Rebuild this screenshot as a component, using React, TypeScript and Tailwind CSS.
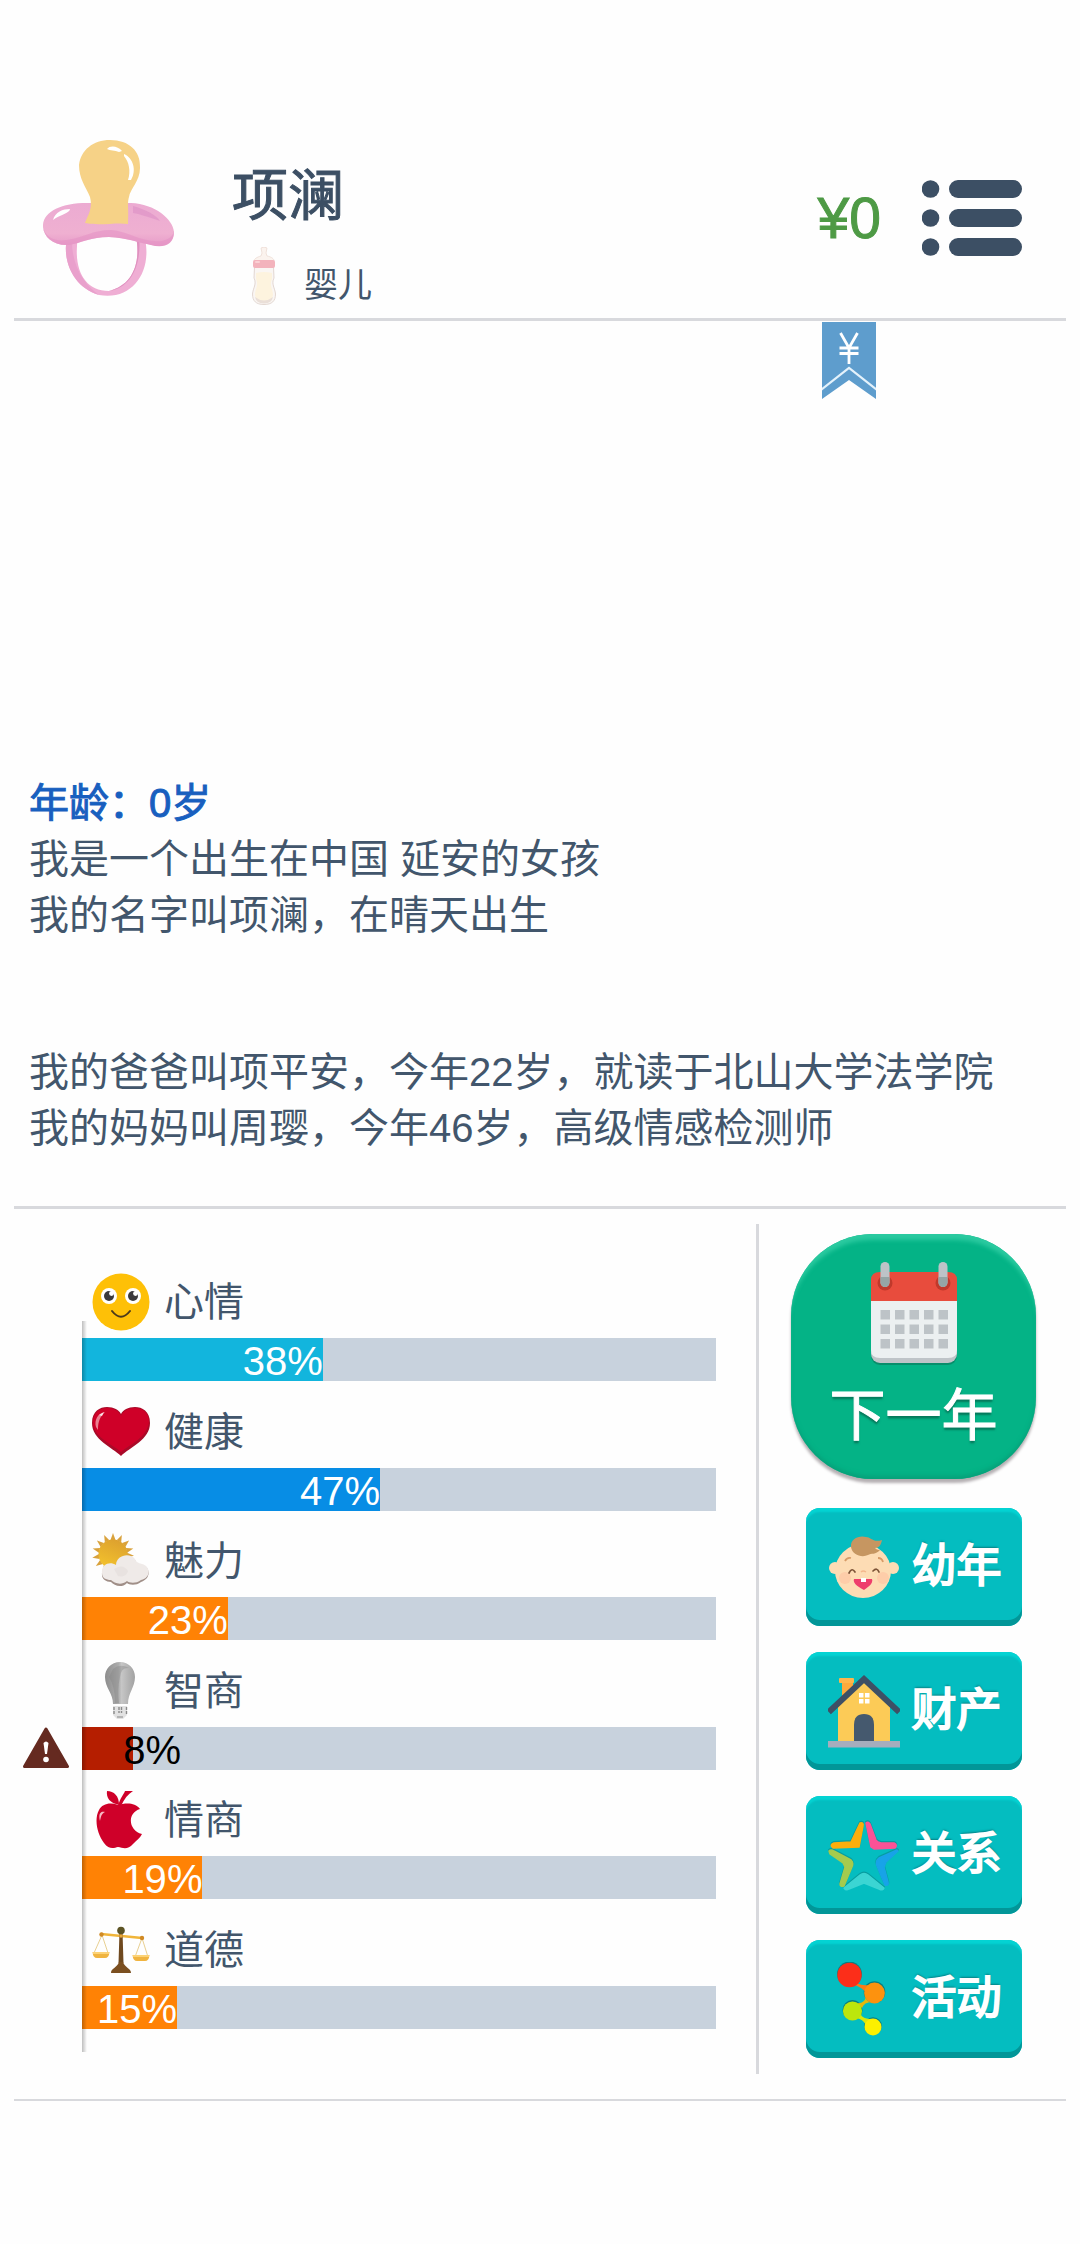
import type { ReactNode } from "react";

function Pacifier() {
  return (
    <svg viewBox="0 0 132 158" className="h-[158px] w-[132px] shrink-0" aria-hidden="true">
      <defs>
        <linearGradient id="shield" x1="0" y1="0" x2="0" y2="1">
          <stop offset="0" stopColor="#ecabd2" />
          <stop offset="0.7" stopColor="#efb0d1" />
          <stop offset="1" stopColor="#e79bc8" />
        </linearGradient>
      </defs>
      <path d="M24 98C19 122 30 148 56 156C90 162 109 132 102 100L93 97C98 124 90 146 66 152C40 152 30 128 35 98Z" fill="#efaed4" />
      <path d="M24 98C19 122 30 148 56 156C42 146 28 128 29 98Z" fill="#e9a0cc" />
      <path d="M93 97C98 124 90 146 66 152C88 149 99 126 96 97Z" fill="#df91bf" />
      <path d="M0 88C-1 72 20 63 48 64H88C112 65 130 80 131 93C131 107 119 109 108 106C94 103 84 99 66 98C48 98 38 104 26 106C10 107 1 98 0 88Z" fill="url(#shield)" />
      <path d="M0 88C2 98 12 103 24 101C42 98 50 91 68 91C86 92 98 104 119 102C128 100 131 95 131 91C132 105 121 109 108 106C94 103 84 99 66 98C48 98 38 104 26 106C10 107 1 98 0 88Z" fill="#e592c4" opacity="0.6" />
      <path d="M90 67C104 71 113 76 117 82C106 78 96 75 90 74Z" fill="#dc8fc4" opacity="0.6" />
      <path d="M10 81C12 73 20 70 27 70C27 74 16 76 10 81Z" fill="#fff" />
      <path d="M67 1C86 1 98 12 97 29C97 42 87 50 86 58C84 65 86 69 85 85C74 83 57 87 42 84C45 76 50 69 47 58C43 48 36 40 36 26C38 11 50 1 67 1Z" fill="#f6d287" />
      <path d="M64 10C67 6 75 7 79 12L76 13C72 11 67 12 64 10Z" fill="#fff" />
      <path d="M81 15C90 19 94 31 88 41L85 41C88 32 86 23 81 17Z" fill="#fff" />
    </svg>
  );
}

function Bottle() {
  return (
    <svg viewBox="0 0 24 58" className="h-[58px] w-6 shrink-0" aria-hidden="true">
      <path d="M9 1Q12 -1 15 1L14 6L15 9C20 10 22 12 22 14H2C2 12 5 10 9 9L10 6Z" fill="#fbf3ee" stroke="#ecdcd4" strokeWidth="0.8" />
      <path d="M2.500 20H21.500L22 31C19 37 23 41 23.500 47C23.500 54 20 57.500 12 57.500C4 57.500 0.500 54 0.500 47C1 41 5 37 2 31Z" fill="#faf6f3" stroke="#dfd3cd" strokeWidth="0.9" />
      <path d="M4 26Q12 24 20 26V32C17 38 21 42 21 48C20 53 17 54 12 54C7 54 4 53 3 48C3 42 7 38 4 32Z" fill="#fdf3de" />
      <path d="M3 50Q12 57 21 50Q20 56 12 56.500Q4 56 3 50Z" fill="#eadfd8" />
      <rect x="1" y="13" width="22" height="8" rx="2" fill="#f3b3bc" />
      <rect x="3" y="14" width="5" height="2" rx="1" fill="#fad0d4" />
    </svg>
  );
}

function MenuIcon() {
  return (
    <svg viewBox="0 0 100 76" className="h-[76px] w-[100px]" fill="#3c4f64" aria-hidden="true">
      {[0, 29, 58].map((y) => (
        <g key={y}>
          <circle cx="8.500" cy={y + 9} r="8.800" />
          <rect x="27" y={y} width="73" height="18" rx="9" />
        </g>
      ))}
    </svg>
  );
}

function Ribbon() {
  return (
    <svg viewBox="0 0 54 77" className="h-[77px] w-[54px]" aria-hidden="true">
      <path d="M0 0H54V77L27 58L0 77Z" fill="#5e9dcd" />
      <path d="M-1 68L27 46L55 68" fill="none" stroke="#e4f2fb" strokeWidth="2.200" />
      <path d="M18.500 11L27 26L35.500 11M17.500 26H36.500M17.500 31.500H36.500M27 25V42" fill="none" stroke="#fff" strokeWidth="2.800" />
    </svg>
  );
}

function Smiley() {
  return (
    <svg viewBox="0 0 58 58" className="size-[58px]" aria-hidden="true">
      <circle cx="29" cy="29" r="28.500" fill="#fec007" />
      <circle cx="17" cy="23" r="8" fill="#fff" />
      <circle cx="41" cy="23" r="8" fill="#fff" />
      <circle cx="17" cy="23" r="5" fill="#3b3a3c" />
      <circle cx="41" cy="23" r="5" fill="#3b3a3c" />
      <circle cx="19.500" cy="20.500" r="2.400" fill="#fff" />
      <circle cx="43.500" cy="20.500" r="2.400" fill="#fff" />
      <path d="M20 38Q29 49.500 38 38" fill="none" stroke="#4a3a1c" strokeWidth="2" strokeLinecap="round" />
    </svg>
  );
}

function Heart() {
  return (
    <svg viewBox="0 0 58 58" className="size-[58px]" aria-hidden="true">
      <path d="M29 53C20 44 0 37 0 20C0 8 8 4 15 4C22 4 27 7 29 11C31 7 36 4 43 4C50 4 58 8 58 20C58 37 38 44 29 53Z" fill="#a90a28" />
      <path d="M29 49C22 42 2 35 1 20C1 9 8 5 15 5C22 5 27 8 29 13C31 8 36 5 43 5C50 5 57 9 57 19C55 35 37 42 29 49Z" fill="#cf0028" />
      <path d="M4 24C2 17 6 10 13 9C8 14 6 18 6 27Z" fill="#f0a0ab" opacity="0.8" />
      <path d="M7 12L12 9L10 13Z" fill="#fff" opacity="0.8" />
    </svg>
  );
}

function SunCloud() {
  return (
    <svg viewBox="0 0 58 58" className="size-[58px]" aria-hidden="true">
      <defs>
        <linearGradient id="sun" x1="0.700" y1="0" x2="0.300" y2="1">
          <stop offset="0" stopColor="#dca02f" />
          <stop offset="1" stopColor="#f3c22c" />
        </linearGradient>
      </defs>
      <g fill="#d9a23c">
        {[120, 145, 170, 195, 220, 245, 270, 295, 320, 345, 5].map((deg) => (
          <path key={deg} d="M35 19.500L42 22L35 24.500Z" transform={`rotate(${deg} 21 22)`} />
        ))}
      </g>
      <circle cx="21" cy="22" r="14.500" fill="url(#sun)" />
      <path d="M10 43C9 34 18 31 24 34C24 24 38 21 43 28C44 31 46 33 50 33C59 35 59 47 49 50C44 54 37 53 35 51C29 57 22 53 19 50C14 50 10 47 10 43Z" fill="#a08f88" />
      <path d="M10 41C9 32 18 29 24 33C24 23 38 20 43 27C44 30 46 31 50 32C59 34 59 46 49 48C44 52 37 51 35 49C29 54 22 51 19 48C14 48 10 46 10 41Z" fill="#efeae8" />
      <path d="M22 37Q31 31 36 39Q34 46 26 44" fill="#e2dcda" opacity="0.6" />
    </svg>
  );
}

function Bulb() {
  return (
    <svg viewBox="0 0 58 58" className="size-[58px]" aria-hidden="true">
      <defs>
        <linearGradient id="glass" x1="0" x2="1">
          <stop offset="0" stopColor="#8d8d8d" />
          <stop offset="0.450" stopColor="#adadad" />
          <stop offset="0.550" stopColor="#c6c6c6" />
          <stop offset="1" stopColor="#a2a2a2" />
        </linearGradient>
      </defs>
      <path d="M28 0C37 0 43 7 43 15C43 25 36 31 36 42H21C21 31 13 26 13 15C13 7 19 0 28 0Z" fill="url(#glass)" />
      <path d="M21 7Q28 1 37 6Q29 5 28 15Q25 28 27 41H23Q23 24 17 15Z" fill="#858585" opacity="0.400" />
      <path d="M21 44H35V53L31 57H25L21 53Z" fill="#e2e2e2" />
      <path d="M22 45V52M27 45V51M29.500 45V51M34.500 45V52" stroke="#8a8a8a" strokeWidth="1.400" strokeDasharray="3 1" fill="none" />
      <path d="M25 55H31" stroke="#a5a5a5" strokeWidth="1.500" />
    </svg>
  );
}

function Apple() {
  return (
    <svg viewBox="0 0 58 58" className="size-[58px]" fill="#cf0029" aria-hidden="true">
      <path d="M26 14C18 11 10 13 7 19C2 28 5 43 12 52C17 59 22 57 26 56C31 57 36 59 41 53C45 49 48 47 50 43C36 39 35 22 48 18C43 11 33 12 26 14Z" />
      <path d="M27 14C18 12 14 7 15 0C22 0 27 5 27 14Z" />
      <path d="M26 15C28 7 32 3 33 0H41C36 3 32 8 29 15Z" />
      <path d="M8 30C6 22 9 20 13 21C9 23 9 26 8 30Z" fill="#f7bac4" />
    </svg>
  );
}

function Scales() {
  return (
    <svg viewBox="0 0 58 58" className="size-[58px]" aria-hidden="true">
      <path d="M10 14L2 32M10 14L16 32M50 17L43 36M50 17L56 36" stroke="#e5ca85" strokeWidth="0.900" fill="none" />
      <path d="M9 13L50 17" stroke="#f0b53a" strokeWidth="2.400" />
      <circle cx="9.500" cy="13.500" r="2.200" fill="#d08a24" />
      <circle cx="50" cy="17" r="2.200" fill="#d08a24" />
      <path d="M0.500 31H17.500Q17 37 13 37H5Q1 37 0.500 31Z" fill="#f0b440" />
      <path d="M40.500 34H57.500Q57 40 53 40H45Q41 40 40.500 34Z" fill="#f0b440" />
      <path d="M1 32H17M41 35H57" stroke="#ffdc86" strokeWidth="1.500" />
      <path d="M27.500 11H30.500L31.500 42H26.500Z" fill="#6f491f" />
      <path d="M19 52C19 47 25 47 27 41H31C33 47 39 47 39 52Z" fill="#7b4f20" />
      <circle cx="29" cy="9.500" r="3.800" fill="#5d5425" />
      <circle cx="29" cy="15" r="1.800" fill="#e8a83a" />
    </svg>
  );
}

function Warning() {
  return (
    <svg viewBox="0 0 46 42" className="h-[42px] w-[46px]" role="img" aria-label="警告">
      <path d="M23 2L44.500 39.500H1.500Z" fill="#652a20" stroke="#652a20" strokeWidth="3" strokeLinejoin="round" />
      <path d="M20.500 16Q23 13 25.500 16L24 27H22Z" fill="#fff" />
      <circle cx="23" cy="32.500" r="2.800" fill="#fff" />
    </svg>
  );
}

function Calendar() {
  return (
    <svg viewBox="0 0 88 104" className="h-[104px] w-[88px]" aria-hidden="true">
      <rect x="1" y="60" width="86" height="43" rx="9" fill="#0a7f5f" opacity="0.700" />
      <rect x="1" y="56" width="86" height="45" rx="9" fill="#bfc4c8" />
      <path d="M1 36H87V88Q87 96 78 96H10Q1 96 1 88Z" fill="#ecf0f1" />
      <path d="M1 39V18Q1 10 10 10H78Q87 10 87 18V39Z" fill="#e84c3d" />
      <circle cx="15" cy="21" r="7.500" fill="#c0392b" />
      <circle cx="73" cy="21" r="7.500" fill="#c0392b" />
      {[10.5, 68.500].map((x) => (
        <g key={x}>
          <rect x={x} y="0" width="9" height="25" rx="4.500" fill="#bdc3c7" />
          <path d={`M${x} 15h9v5.500a4.500 4.500 0 0 1 -9 0Z`} fill="#95a5a5" />
        </g>
      ))}
      {[48, 62.500, 77].map((y) =>
        [10.5, 25, 39.500, 54, 68.500].map((x) => (
          <rect key={`${x}-${y}`} x={x} y={y} width="9.500" height="9.500" fill="#bdc3c7" />
        )),
      )}
    </svg>
  );
}

function Baby() {
  return (
    <svg viewBox="0 0 72 74" className="h-[74px] w-[72px]" aria-hidden="true">
      <circle cx="7" cy="38" r="6" fill="#fddcb4" />
      <circle cx="65" cy="38" r="6" fill="#fddcb4" />
      <ellipse cx="35" cy="41" rx="28" ry="27" fill="#fddcb4" />
      <circle cx="17" cy="48" r="6" fill="#fdc6a4" opacity="0.700" />
      <circle cx="55" cy="48" r="6" fill="#fdc6a4" opacity="0.700" />
      <path d="M23 17C22 9 31 5 38 7C43 7 45 13 54 10C53 15 51 18 47 18C49 20 51 20 52 20C48 25 43 23 40 25C34 28 24 25 23 17Z" fill="#c69661" />
      <path d="M17 31Q19 27 23 28M50 28Q54 28 55 32" fill="none" stroke="#d79b67" strokeWidth="1.800" />
      <path d="M21 43Q24 37 27 42M45 41Q49 37 51 42" fill="none" stroke="#7d5438" strokeWidth="1.700" strokeLinecap="round" />
      <path d="M33 42Q35 40 38 42" fill="none" stroke="#f4b78c" strokeWidth="1.400" />
      <path d="M26 49H44C46 54 38 58 36 60C33 58 24 54 26 49Z" fill="#ee3e6c" />
      <rect x="33" y="48" width="5" height="4" fill="#fff" />
    </svg>
  );
}

function House() {
  return (
    <svg viewBox="0 0 72 74" className="h-[74px] w-[72px]" aria-hidden="true">
      <path d="M14 9V26L25 16V9Z" fill="#fdaa3c" />
      <rect x="11" y="4" width="15" height="5" rx="1" fill="#fdb64c" />
      <path d="M10 68V30L36 5L62 30V68Z" fill="#fccb57" />
      <path d="M3 36L36 5L69 36" fill="none" stroke="#3e5065" strokeWidth="6" strokeLinecap="square" />
      <path d="M26 68V51Q26 40 36 40Q46 40 46 51V68Z" fill="#45596e" />
      <rect x="31" y="19" width="10.500" height="10.500" fill="#fff" />
      <path d="M36.200 19V30M31 24.300H42" stroke="#fccb57" strokeWidth="1.500" />
      <rect x="0" y="67" width="72" height="6.500" fill="#a6adbd" />
    </svg>
  );
}

function Star() {
  return (
    <svg viewBox="0 0 72 74" className="h-[74px] w-[72px]" aria-hidden="true">
      <g fill="#087f82" stroke="#087f82" strokeWidth="2" strokeLinejoin="round" opacity="0.500" transform="translate(0 -1)">
        <path d="M32 5Q36 4 35 8L31 29L5 30Q1 27 6 25L23 24Z" />
        <path d="M38 5Q40 3 42 6L48 22Q49 24 53 25L66 25Q70 27 67 30L46 31L43 29Z" />
        <path d="M1 33Q3 31 6 33L23 42Q26 45 24 49L16 68Q12 69 12 66L17 49L15 45L2 36Z" />
        <path d="M70 33L69 32L51 40Q47 43 49 48L57 67Q61 68 60 64L56 49L58 44Z" />
        <path d="M16 70L32 57Q36 54 40 57L56 70Q55 73 51 71L36 65L21 71Q18 73 16 70Z" />
      </g>
      <g strokeWidth="1.500" strokeLinejoin="round">
        <path d="M32 5Q36 4 35 8L31 29L5 30Q1 27 6 25L23 24Z" fill="#fcae0c" stroke="#fcae0c" />
        <path d="M38 5Q40 3 42 6L48 22Q49 24 53 25L66 25Q70 27 67 30L46 31L43 29Z" fill="#fb5296" stroke="#fb5296" />
        <path d="M1 33Q3 31 6 33L23 42Q26 45 24 49L16 68Q12 69 12 66L17 49L15 45L2 36Z" fill="#a4cb4e" stroke="#a4cb4e" />
        <path d="M70 33L69 32L51 40Q47 43 49 48L57 67Q61 68 60 64L56 49L58 44Z" fill="#18a3e8" stroke="#18a3e8" />
        <path d="M16 70L32 57Q36 54 40 57L56 70Q55 73 51 71L36 65L21 71Q18 73 16 70Z" fill="#3bd5d3" stroke="#3bd5d3" />
      </g>
    </svg>
  );
}

function Dots() {
  return (
    <svg viewBox="0 0 72 74" className="h-[74px] w-[72px]" aria-hidden="true">
      <g fill="#087f82" transform="translate(0 -1)">
        <circle cx="21.500" cy="13" r="12.500" />
        <circle cx="46.500" cy="31" r="10.800" />
        <circle cx="24.500" cy="49" r="10" />
        <circle cx="45" cy="65" r="8.800" />
      </g>
      <path d="M28 21Q35 24 41 23L38 31Q35 26 27 23Z" fill="#fb7a18" />
      <path d="M38 35Q38 40 44 40Q36 40 34 46L29 41Q36 42 38 35Z" fill="#e5b80a" />
      <path d="M32 49Q32 57 44 57L38 63Q35 57 28 56Z" fill="#dbe90a" />
      <circle cx="21.500" cy="13" r="12.200" fill="#fc2e19" />
      <circle cx="46.500" cy="31" r="10.400" fill="#fd920e" />
      <circle cx="24.500" cy="49" r="9.600" fill="#bce60c" />
      <circle cx="45" cy="65" r="8.500" fill="#fcf000" />
    </svg>
  );
}

type Stat = { label: string; value: number; color: string; icon: ReactNode; low?: boolean };

const stats: Stat[] = [
  { label: "心情", value: 38, color: "bg-[#12b5dd]", icon: <Smiley /> },
  { label: "健康", value: 47, color: "bg-[#078de5]", icon: <Heart /> },
  { label: "魅力", value: 23, color: "bg-[#ff8205]", icon: <SunCloud /> },
  { label: "智商", value: 8, color: "bg-[#b51e00]", icon: <Bulb />, low: true },
  { label: "情商", value: 19, color: "bg-[#ff8205]", icon: <Apple /> },
  { label: "道德", value: 15, color: "bg-[#ff8205]", icon: <Scales /> },
];

const actions = [
  { label: "幼年", icon: <Baby /> },
  { label: "财产", icon: <House /> },
  { label: "关系", icon: <Star /> },
  { label: "活动", icon: <Dots /> },
];

function StatRow({ stat }: { stat: Stat }) {
  return (
    <li className="flex flex-1 flex-col">
      <div className="flex items-center gap-[14px] pl-[10px]">
        {stat.icon}
        <span className="text-[40px] leading-[58px]">{stat.label}</span>
      </div>
      <div className="relative mt-[7px]">
        {stat.low && (
          <div className="absolute top-0 right-full mr-[13px]">
            <Warning />
          </div>
        )}
        <div
          role="progressbar"
          aria-label={stat.label}
          aria-valuenow={stat.value}
          aria-valuemin={0}
          aria-valuemax={100}
          className="h-[43px] bg-[#c8d2dd]"
        >
          <div className={`h-full ${stat.color}`} style={{ width: `${stat.value}%` }}>
            <div
              className={
                stat.low
                  ? "w-[99px] text-right text-[40px] leading-[46px] text-black"
                  : "text-right text-[40px] leading-[46px] text-white"
              }
            >
              {stat.value}%
            </div>
          </div>
        </div>
      </div>
    </li>
  );
}

export default function App() {
  return (
    <div className="flex min-h-screen flex-col bg-[#fefefe] pb-[143px] font-['Liberation_Sans','Noto_Sans_CJK_SC',sans-serif] text-[#42566c]" lang="zh-CN">
      <header className="relative mx-[14px] flex items-start border-b-3 border-[#d8d9dd] pt-[139px] pr-11 pb-[13px] pl-[29px]">
        <Pacifier />
        <div className="ml-[57px] pt-4">
          <h1 className="text-[56px] leading-[82px] text-[#3c4f64] [-webkit-text-stroke:1px]">项澜</h1>
          <div className="mt-2.5 flex items-end gap-7 pl-5">
            <Bottle />
            <span className="text-[34px] leading-[40px]">婴儿</span>
          </div>
        </div>
        <div className="ml-auto flex h-[158px] items-center gap-[41px]">
          <span className="text-[57px] leading-[64px] text-[#4e9a45] [-webkit-text-stroke:1px]">¥0</span>
          <button type="button" aria-label="菜单">
            <MenuIcon />
          </button>
        </div>
        <button type="button" aria-label="资金" className="absolute top-full right-[190px] mt-1">
          <Ribbon />
        </button>
      </header>

      <main className="flex flex-1 flex-col">
        <section className="flex flex-1 flex-col justify-end px-[29px] pb-[50px] text-[40px] leading-[56px]">
          <h2 className="text-[#185fbf] [-webkit-text-stroke:1px]">年龄：0岁</h2>
          <p>我是一个出生在中国 延安的女孩</p>
          <p>我的名字叫项澜，在晴天出生</p>
          <p className="mt-[101px]">我的爸爸叫项平安，今年22岁，就读于北山大学法学院</p>
          <p>我的妈妈叫周璎，今年46岁，高级情感检测师</p>
        </section>

        <section className="mx-[14px] flex border-t-3 border-b-2 border-[#d8d9dd]">
          <div className="mt-[15px] mb-[25px] flex flex-1 border-r-3 border-[#d8d9dd] pt-[49px] pr-10 pb-[24px] pl-[68px]">
            <ul className="relative flex flex-1 flex-col">
              {stats.map((stat) => (
                <StatRow key={stat.label} stat={stat} />
              ))}
              <li aria-hidden="true" className="absolute top-12 -bottom-0.5 left-0 w-[5px] bg-linear-to-r from-black/25 to-transparent" />
            </ul>
          </div>

          <nav className="flex w-[307px] flex-col items-center pt-[25px] pb-[41px] pl-0.5">
            <button
              type="button"
              className="flex size-[245px] flex-col items-center rounded-[82px] bg-[#04b386] pt-7 shadow-[inset_0_8px_4px_-2px_#2bcaa0,inset_0_-4px_4px_-1px_#07a079,0_4px_3px_#b5b0b3]"
            >
              <Calendar />
              <span className="mt-3.5 text-[56px] leading-[72px] text-white [-webkit-text-stroke:1px] [text-shadow:0_3px_2px_#067a5c]">下一年</span>
            </button>
            <div className="mt-[29px] flex flex-col gap-[26px]">
              {actions.map((action) => (
                <button
                  key={action.label}
                  type="button"
                  className="flex h-[118px] w-[216px] items-center gap-3 rounded-[14px] bg-[#04bdc0] pl-[22px] shadow-[inset_0_5px_2px_-1px_#04d3d3,inset_0_-6px_0_#029698]"
                >
                  {action.icon}
                  <span className="text-[45px] leading-[60px] whitespace-nowrap text-white [-webkit-text-stroke:2px] [text-shadow:0_-2px_2px_#087f82]">
                    {action.label}
                  </span>
                </button>
              ))}
            </div>
          </nav>
        </section>
      </main>
    </div>
  );
}
